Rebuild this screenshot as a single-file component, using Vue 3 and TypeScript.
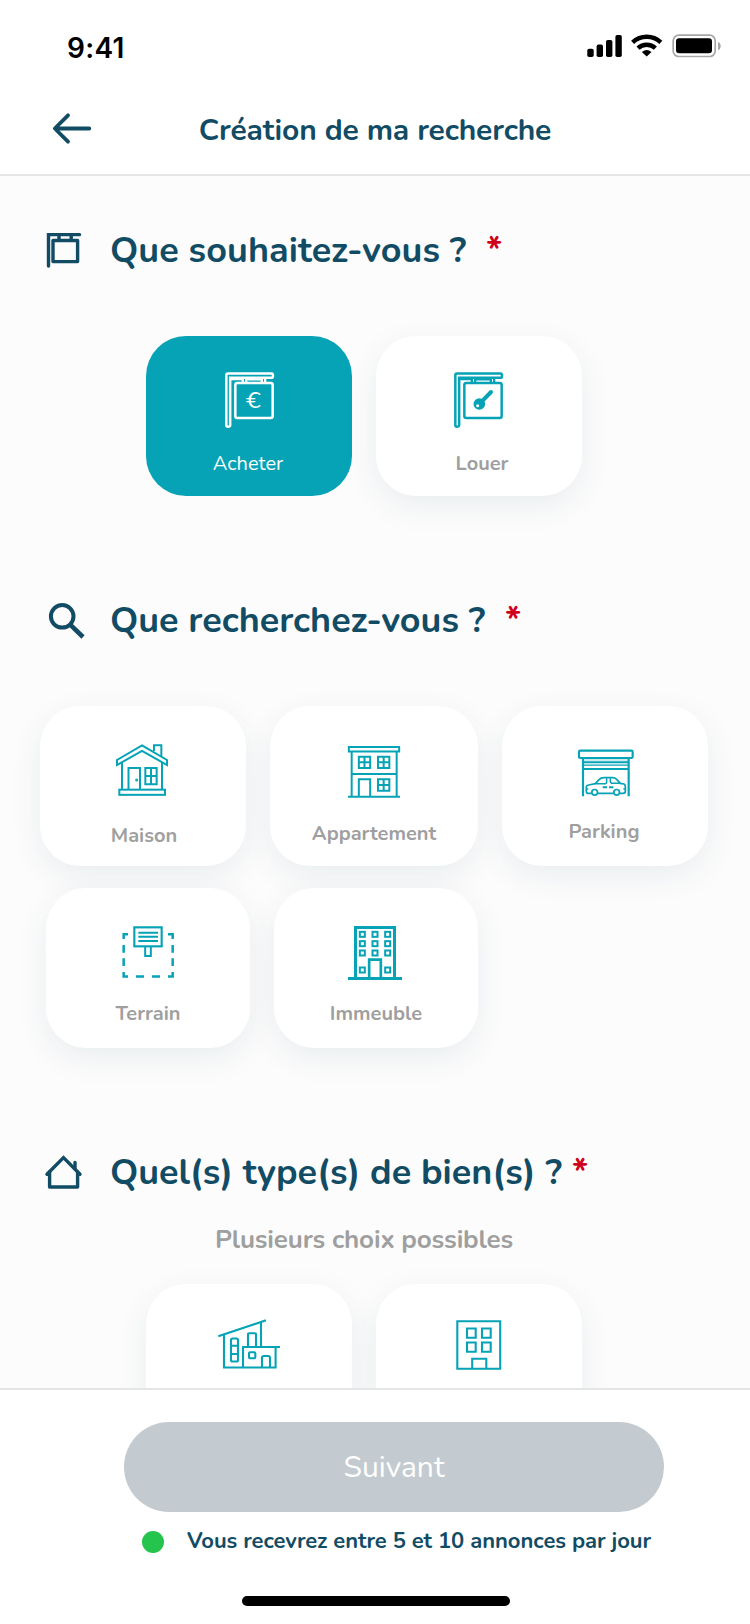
<script setup lang="ts">
import { ref } from 'vue'

type IconName = 'buy' | 'rent' | 'house' | 'flat' | 'garage' | 'land' | 'building' | 'villa' | 'block'

interface Choice {
  id: string
  label: string
  icon: IconName
  viewBox: string
}

const offers: Choice[] = [
  { id: 'acheter', label: 'Acheter', icon: 'buy', viewBox: '249 132 216 216' },
  { id: 'louer', label: 'Louer', icon: 'rent', viewBox: '234 132 216 216' },
]

const properties: Choice[][] = [
  [
    { id: 'maison', label: 'Maison', icon: 'house', viewBox: '231 117 216 216' },
    { id: 'appartement', label: 'Appartement', icon: 'flat', viewBox: '234 117 216 216' },
    { id: 'parking', label: 'Parking', icon: 'garage', viewBox: '237 117 216 216' },
  ],
  [
    { id: 'terrain', label: 'Terrain', icon: 'land', viewBox: '246 108 216 216' },
    { id: 'immeuble', label: 'Immeuble', icon: 'building', viewBox: '240 108 216 216' },
  ],
]

const kinds: Choice[] = [
  { id: 'villa', label: '', icon: 'villa', viewBox: '213 1312 72 72' },
  { id: 'block', label: '', icon: 'block', viewBox: '443 1312 72 72' },
]

const rows = [
  { section: 'offer', items: offers },
  { section: 'property', items: properties[0] },
  { section: 'property second', items: properties[1] },
  { section: 'kind', items: kinds },
]

const selected = ref('acheter')

const windows = [163, 191, 219].flatMap((y) => [307, 345, 383].map((x) => ({ x, y })))
windows.push({ x: 307, y: 270 }, { x: 383, y: 270 })
</script>

<template>
  <div class="screen">
    <header class="top">
      <div class="status">
        <span class="time">9:41</span>
        <svg class="status-icons" viewBox="584 30 140 30">
          <rect x="587.3" y="48.7" width="6.4" height="8.3" rx="1.8" />
          <rect x="596.6" y="44.6" width="6.4" height="12.4" rx="1.8" />
          <rect x="606" y="40" width="6.4" height="17" rx="1.8" />
          <rect x="615.4" y="35" width="6.4" height="22" rx="1.8" />
          <g fill="none" stroke="#000" stroke-width="4.4">
            <path d="M632.6 42.3 A20.5 20.5 0 0 1 660.8 42.3" />
            <path d="M638 48.2 A12.6 12.6 0 0 1 655.4 48.2" />
          </g>
          <path d="M646.7 56.6 L641.9 52.1 Q646.7 47.8 651.5 52.1 Z" />
          <rect x="673.2" y="35.2" width="42" height="21.3" rx="5.5" fill="none" stroke="#a6a6a6" stroke-width="1.7" />
          <rect x="676" y="38.3" width="36" height="15" rx="3" />
          <path d="M718 41.8 Q720.8 43 720.8 46 Q720.8 49 718 50.2 Z" fill="#a6a6a6" />
        </svg>
      </div>
      <nav class="nav">
        <svg class="back" viewBox="50 108.5 44 40">
          <path d="M89.3 128 H55 M68 114.8 L54.8 128 L68 141.2" />
        </svg>
        <h1>Création de ma recherche</h1>
      </nav>
    </header>

    <main class="content">
      <template v-for="row in rows" :key="row.items[0].id">
        <div v-if="row.section === 'offer'" class="heading">
          <svg class="mark" viewBox="40 226 48 44">
            <path d="M48.5 266 V234.600 H79.600" stroke-linecap="round" />
            <path d="M59 235 V240 M71.200 235 V240" />
            <path d="M53 240.500 H77.600 V261.600 H53 Z" stroke-linejoin="round" />
          </svg>
          <h2 class="t1">Que souhaitez-vous ?</h2>
          <span class="star">*</span>
        </div>
        <div v-else-if="row.section === 'property'" class="heading">
          <svg class="mark" viewBox="40 596 48 44">
            <circle cx="62.200" cy="616.300" r="11.300" stroke-width="4" />
            <path d="M70.200 624.600 L83 637" stroke-width="4.600" />
          </svg>
          <h2 class="t2">Que recherchez-vous ?</h2>
          <span class="star">*</span>
        </div>
        <div v-else-if="row.section === 'kind'" class="heading">
          <svg class="mark" viewBox="40 1148 48 44">
            <path d="M47 1174.200 L63.500 1157.600 L80 1174.200" stroke-linecap="round" />
            <path d="M49.600 1172 V1187 H77.600 V1172 M75 1162.500 V1169" stroke-linejoin="round" stroke-linecap="round" />
          </svg>
          <h2 class="t3">Quel(s) type(s) de bien(s) ?</h2>
          <span class="star">*</span>
        </div>
        <p v-if="row.section === 'kind'" class="hint">Plusieurs choix possibles</p>

        <div class="cards" :class="row.section">
          <button
            v-for="item in row.items"
            :key="item.id"
            type="button"
            class="card"
            :class="[item.id, { active: selected === item.id }]"
            @click="selected = item.id"
          >
            <svg class="icon" :class="{ small: row.section === 'kind' }" :viewBox="item.viewBox">
              <g v-if="item.icon === 'buy' || item.icon === 'rent'" :transform="item.icon === 'rent' ? 'translate(-18 0)' : undefined">
                <path d="M294 160.500 H425 Q429 161 429 167 Q429 173.500 425 173.500 H300.500 V316 Q300 320 294.500 320 Q289 320 289 316 V166 Q289 160.500 294 160.500 Z" stroke-width="7.500" />
                <path d="M338.500 174 V190 M348.500 174 V190 M395.500 174 V190 M405.500 174 V190 M300 177 H338 M348 178 H396" stroke-width="7" />
                <rect x="316" y="189" width="112" height="105" rx="6" stroke-width="7.500" />
                <text v-if="item.icon === 'buy'" x="347" y="264" textLength="45" lengthAdjust="spacingAndGlyphs" class="euro">€</text>
                <template v-else>
                  <path d="M368 245 L396 216" stroke-width="12" stroke-linecap="round" />
                  <circle cx="361" cy="252" r="11.500" stroke-width="12" />
                  <circle cx="363" cy="250" r="10" class="solid" />
                  <circle cx="356" cy="257" r="4.500" class="hole" />
                </template>
              </g>
              <g v-else-if="item.icon === 'house'">
                <path d="M372 168 V150.500 H394 V183" />
                <path d="M336 151 L411 195 V210 L336 168 L261 210 V195 Z" />
                <path d="M276 204 V283 M396 204 V283" />
                <rect x="268" y="284" width="137" height="15.500" />
                <path d="M295.500 283 V219 H330 V283" />
                <circle cx="320" cy="255" r="2.800" stroke-width="3.500" />
                <path d="M346 219 H380 V268 H346 Z M363 219 V268 M346 243 H380" />
              </g>
              <g v-else-if="item.icon === 'flat'">
                <path d="M266.500 156 H417.500 V169.500 H266.500 Z M275 170 V304 M410 170 V304 M264 305.500 H420 M275 237 H410" />
                <path d="M296.500 303 V253 H330.500 V303" />
                <path d="M296.500 185 h34 v34 h-34 Z m17 0 v34 m-17 -17 h34" />
                <path d="M354 185 h34 v34 h-34 Z m17 0 v34 m-17 -17 h34" />
                <path d="M354 253 h34 v34 h-34 Z m17 0 v34 m-17 -17 h34" />
              </g>
              <g v-else-if="item.icon === 'garage'">
                <rect x="267" y="167" width="161" height="22" rx="4" stroke-width="6.500" />
                <path d="M279 190 V304 M416 190 V304" stroke-width="6.500" />
                <path d="M282 201.500 H414 M282 222 H414" />
                <path d="M282 210.500 H414" stroke-width="4" />
                <path d="M282 195 H414" stroke-width="3" opacity="0.4" />
                <path d="M305 295 H294 Q289 295 289 289 V276 Q289 271 296 270 L316 266 L327 254 Q333 248 341 248 H368 Q375 248 380 253 L391 265 L402 267 Q406 269 406 275 V289 Q406 295 399 295 H390 M324 295 H370" stroke-width="5.200" />
                <path d="M317 266 H346 Q350 266 350 262 V250 M361 250 V258 Q361 265 368 265 H391 M289 282 H295 M400 282 H406" stroke-width="4.500" />
                <path d="M338 277 H351 M357 277 H370" stroke-width="6" />
                <circle cx="314" cy="292" r="8.500" stroke-width="5.200" />
                <circle cx="380" cy="292" r="8.500" stroke-width="5.200" />
              </g>
              <g v-else-if="item.icon === 'land'" stroke-width="7.500">
                <path d="M281 177 V162.500 H294 M414 162.500 H428 V177 M281 195 V218 M281 235 V258 M428 195 V218 M428 235 V258 M281 276 V289.500 H294 M414 289.500 H428 V276 M318 289.500 H342 M366 289.500 H390" />
                <rect x="313" y="142" width="82" height="57" stroke-width="6.500" />
                <path d="M325 158 H384 M325 170.500 H384 M325 183 H384" stroke-width="6.200" />
                <path d="M345.500 201 V228 H362.500 V201" stroke-width="6" />
              </g>
              <g v-else-if="item.icon === 'building'">
                <path d="M286.500 292 V142.500 H403.500 V292 M264 295.500 H426" stroke-width="9" />
                <path d="M327.500 292 V239 H362.500 V292" stroke-width="8" />
                <rect v-for="(w, i) in windows" :key="i" :x="w.x - 7.5" :y="w.y - 7.5" width="15" height="15" />
              </g>
              <g v-else-if="item.icon === 'villa'">
                <path d="M218.300 1336.300 L266 1320.300 M224 1335 V1367.500 H275.600 V1347 M243 1367 V1347 H280 M261 1322 V1347" />
                <path d="M248 1346 V1334 Q248 1333.300 249 1333.300 H255 Q256 1333.300 256 1334 V1346" />
                <rect x="249" y="1352.300" width="6.300" height="6" rx="1" />
                <path d="M262 1367 V1357.500 Q262 1356 264 1356 H268 Q270 1356 270 1357.500 V1367" />
                <rect x="231" y="1338.500" width="7" height="23" rx="1.500" />
                <path d="M231 1345.700 H238 M231 1354 H238" />
              </g>
              <g v-else>
                <path d="M457.300 1321.200 H500.200 V1368.800 H457.300 Z" />
                <path d="M467 1328.500 h8.700 v9.300 h-8.700 Z m15 0 h8.700 v9.300 h-8.700 Z m-15 14 h8.700 v9.300 h-8.700 Z m15 0 h8.700 v9.300 h-8.700 Z" />
                <path d="M472.200 1368 V1358.700 H486.300 V1368" />
              </g>
            </svg>
            <span v-if="item.label" class="label">{{ item.label }}</span>
          </button>
        </div>
      </template>
    </main>

    <footer class="bottom">
      <button type="button" class="next">Suivant</button>
      <p class="notice"><i class="dot"></i><span>Vous recevrez entre 5 et 10 annonces par jour</span></p>
      <div class="home"></div>
    </footer>
  </div>
</template>

<style>
body {
  margin: 0;
}
</style>

<style scoped>
.screen {
  width: 750px;
  height: 1624px;
  display: flex;
  flex-direction: column;
  overflow: hidden;
  background: #fcfcfc;
  color: #124c64;
  font-family: Nunito, Lato, "Open Sans", sans-serif;
}
h1, h2, p {
  margin: 0;
}
.top {
  box-sizing: border-box;
  height: 176px;
  flex: none;
  background: #fff;
  border-bottom: 2px solid #e4e5e5;
}
.status {
  height: 80px;
  display: flex;
  justify-content: space-between;
  padding: 30px 26px 0 67px;
  box-sizing: border-box;
}
.time {
  color: #000;
  font: 600 28px/36px Inter, sans-serif;
  letter-spacing: 0.3px;
}
.status-icons {
  width: 140px;
  height: 30px;
}
.nav {
  display: grid;
  grid-template-columns: 44px 1fr 44px;
  align-items: center;
  padding: 28px 50px 0;
  height: 40px;
}
.back {
  width: 44px;
  height: 40px;
  fill: none;
  stroke: #124c64;
  stroke-width: 3.8;
  stroke-linecap: round;
  stroke-linejoin: round;
}
h1 {
  padding-top: 4px;
  text-align: center;
  font-size: 30px;
  line-height: 38px;
  font-weight: 700;
  letter-spacing: -0.13px;
  white-space: nowrap;
}
.content {
  flex: 1;
  min-height: 0;
  overflow: hidden;
  padding-top: 50px;
}
.heading {
  display: flex;
  height: 44px;
  padding-left: 40px;
}
.mark {
  width: 48px;
  height: 44px;
  margin-right: 22px;
  flex: none;
  fill: none;
  stroke: #124c64;
  stroke-width: 3.4;
}
h2 {
  font-size: 36px;
  line-height: 49px;
  font-weight: 700;
  white-space: nowrap;
}
.t1 {
  width: 376px;
  letter-spacing: 0.06px;
}
.t2 {
  width: 395px;
}
.t3 {
  width: 462px;
}
.star {
  color: #d0021b;
  font-size: 36px;
  line-height: 49px;
  font-weight: 700;
}
.hint {
  width: 728px;
  margin: 32px 0 28px;
  text-align: center;
  font-size: 26px;
  line-height: 32px;
  font-weight: 700;
  letter-spacing: -0.16px;
  color: #9f9f9f;
}
.cards {
  display: flex;
  gap: 24px;
}
.offer,
.kind {
  padding-left: 146px;
}
.offer {
  margin: 66px 0 100px;
}
.property {
  margin-top: 66px;
  padding-left: 40px;
}
.property.second {
  margin: 22px 0 100px;
  padding-left: 46px;
}
.card {
  width: 206px;
  height: 160px;
  padding: 28px 0 0;
  box-sizing: border-box;
  flex: none;
  display: flex;
  flex-direction: column;
  align-items: center;
  border: 0;
  border-radius: 40px;
  background: #fff;
  box-shadow: 0 10px 32px rgba(18, 60, 90, 0.08);
  font-family: inherit;
  color: #9f9f9f;
}
.appartement {
  width: 208px;
}
.second .card {
  width: 204px;
}
.active {
  background: #06a3b6;
  color: #fff;
  box-shadow: none;
}
.icon {
  width: 72px;
  height: 72px;
  flex: none;
  fill: none;
  stroke: #06a3b6;
  stroke-width: 6;
}
.icon.small {
  stroke-width: 2.1;
}
.active .icon {
  stroke: #fff;
}
.solid {
  fill: #06a3b6;
  stroke: none;
}
.hole {
  fill: #fff;
  stroke: none;
}
.euro {
  fill: #fff;
  stroke: none;
  font-size: 63px;
}
.label {
  margin-top: 16px;
  font-size: 20px;
  line-height: 24px;
  font-weight: 700;
}
.active .label {
  font-weight: 400;
  padding-right: 2px;
}
.louer .label {
  padding-left: 6px;
}
.maison .label {
  margin-top: 18px;
  padding-left: 2px;
}
.parking .label {
  margin-top: 14px;
  padding-right: 2px;
}
.second .label {
  margin-top: 14px;
}
.bottom {
  box-sizing: border-box;
  height: 236px;
  flex: none;
  background: #fff;
  border-top: 2px solid #e4e5e5;
  padding-top: 32px;
}
.next {
  display: block;
  width: 540px;
  height: 90px;
  margin-left: 124px;
  padding: 0;
  border: 0;
  border-radius: 45px;
  background: #c3cbd0;
  color: #fff;
  font-family: inherit;
  font-size: 30px;
  line-height: 92px;
}
.notice {
  display: flex;
  align-items: center;
  height: 28px;
  margin-top: 14px;
  padding: 2px 0 0 142px;
  box-sizing: border-box;
  font-size: 22px;
  line-height: 26px;
  font-weight: 700;
  letter-spacing: -0.04px;
  white-space: nowrap;
}
.dot {
  width: 22px;
  height: 22px;
  margin: 2px 23px 0 0;
  border-radius: 50%;
  background: #25c44c;
}
.home {
  width: 268px;
  height: 10px;
  margin: 42px 0 0 242px;
  border-radius: 5px;
  background: #000;
}
</style>
